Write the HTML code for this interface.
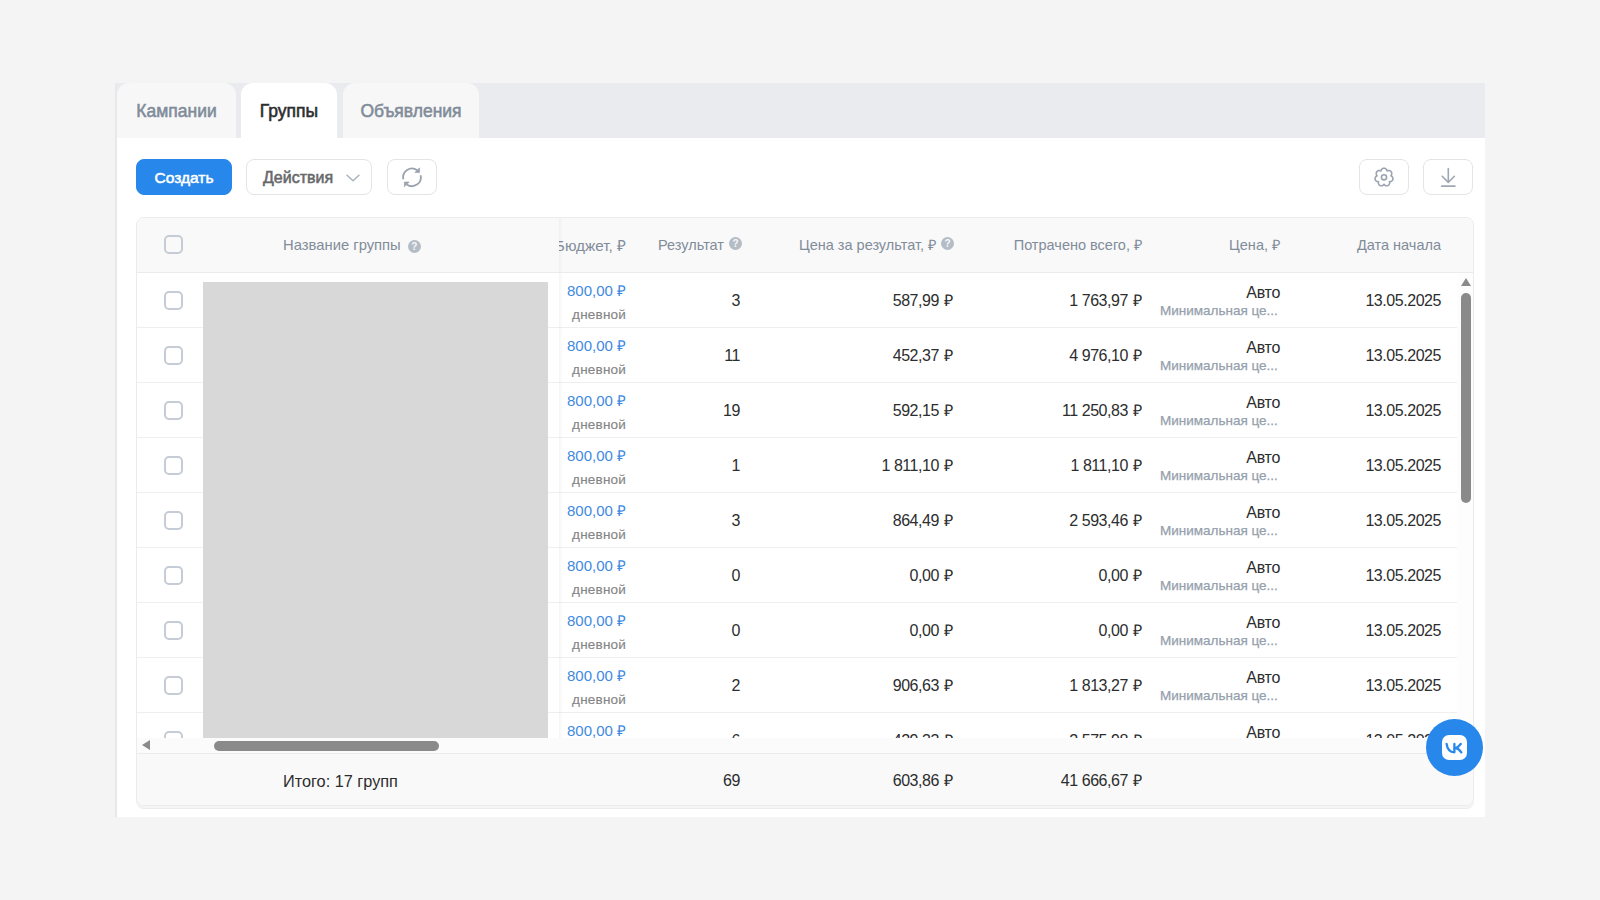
<!DOCTYPE html>
<html><head><meta charset="utf-8"><style>
*{margin:0;padding:0;box-sizing:border-box}
html,body{width:1600px;height:900px;overflow:hidden;background:#f4f4f4;font-family:"Liberation Sans",sans-serif}
.container{position:absolute;left:115px;top:83px;width:1370px;height:734px;background:#fff;border-left:2px solid #e6e8ec}
.tabbar{position:absolute;left:0;top:0;width:1368px;height:55px;background:#e9ebef}
.tab{position:absolute;top:0;height:55px;border-radius:12px 12px 0 0;background:#f7f7f8;color:#818c99;font-size:17.5px;font-weight:normal;-webkit-text-stroke:0.55px currentColor;line-height:57px;text-align:center}
.t1{left:0;width:119px}
.t2{left:124px;width:96px;background:#fff;color:#2c2d2e}
.t3{left:226px;width:136px}
.btn{position:absolute;top:76px;height:36px;border-radius:8px;border:1px solid #e3e4e7;background:#fff;font-size:15.5px;font-weight:normal;-webkit-text-stroke:0.55px currentColor;line-height:35px}
.create{left:19px;width:96px;background:#2787eb;border-color:#2787eb;color:#fff;text-align:center}
.actions{left:129px;width:126px;color:#666869;padding-left:16px;font-size:16px}
.chev{position:absolute;left:99px;top:14px}
.icon{width:50px}
.icon svg{position:absolute;left:12px;top:5px}
.refresh{left:270px}
.gear{left:1242px}
.dl{left:1306px}
.table{position:absolute;left:19px;top:134px;width:1338px;height:589px;border:1px solid #ebebeb;border-radius:8px;overflow:hidden;background:#fff}.tshadow{position:absolute;left:19px;top:134px;width:1338px;height:589px;border-radius:8px;box-shadow:0 1px 0 #f5f5f5,0 2px 0 #f5f5f5,0 3px 0 #ececec}
.thead{position:absolute;left:0;top:0;width:100%;height:55px;background:#f9f9f9;border-bottom:1px solid #ebebeb}
.cb{position:absolute;left:27px;width:19px;height:19px;border:2px solid #c5ccd5;border-radius:5px}
.hcb{top:17px}
.h{position:absolute;top:19px;font-size:14.5px;line-height:17px;color:#818c99;white-space:nowrap}
.q{position:relative;display:inline-block;width:13px;height:13px;border-radius:50%;background:#b4bcc6;color:#f9f9f9;font-size:10px;font-weight:bold;text-align:center;line-height:13px;margin-left:5px;vertical-align:top;top:0px}
.hname{left:146px;font-size:14.8px}.hname .q{top:3px;margin-left:7px}
.hbud{right:847px;font-size:15.3px}
.hres{right:731px}
.hprice{right:519px}
.hspent{right:331px}
.hcena{right:193px}
.hdate{right:32px}
.body{position:absolute;left:0;top:55px;width:100%;height:465px;overflow:hidden}
.row{position:absolute;left:0;width:1336px;height:55px;border-bottom:1px solid #efefef}
.num{position:absolute;top:19px;font-size:16px;letter-spacing:-0.45px;color:#2c2d2e;white-space:nowrap;text-align:right}
.budget{position:absolute;right:847px;top:9px;font-size:15px;color:#3f8ae0;white-space:nowrap}
.daily{position:absolute;right:847px;top:34px;font-size:13.5px;letter-spacing:0.2px;color:#858585;-webkit-text-stroke:0.15px currentColor;white-space:nowrap}
.res{right:733px}
.price{right:520px}
.spent{right:331px}
.auto{position:absolute;right:193px;top:11px;font-size:16px;letter-spacing:-0.3px;color:#2c2d2e}
.minp{position:absolute;left:1023px;top:30px;font-size:13.5px;color:#95a0ac;-webkit-text-stroke:0.25px currentColor;white-space:nowrap}
.date{right:32px}
.sticky{position:absolute;left:422px;top:0;width:4px;height:466px;background:linear-gradient(to right,rgba(0,0,0,0.04),rgba(0,0,0,0))}
.redact{position:absolute;left:66px;top:9px;width:345px;height:457px;background:#d8d8d8}
.vscroll{position:absolute;left:1320px;top:0;width:16px;height:466px;background:#fdfdfd}
.varrow{position:absolute;left:4px;top:5px;width:0;height:0;border-left:5px solid transparent;border-right:5px solid transparent;border-bottom:8px solid #8a8a8a}
.vthumb{position:absolute;left:4px;top:20px;width:10px;height:210px;border-radius:5px;background:#8a8a8a}
.hscroll{position:absolute;left:0;top:520px;width:100%;height:15px;background:#fbfbfb}
.harrow{position:absolute;left:5px;top:2px;width:0;height:0;border-top:5px solid transparent;border-bottom:5px solid transparent;border-right:8px solid #8a8a8a}
.hthumb{position:absolute;left:77px;top:3px;width:225px;height:10px;border-radius:5px;background:#8a8a8a}
.tfoot{position:absolute;left:0;top:535px;width:100%;height:52px;background:#f9f9f9;border-top:1px solid #ebebeb}
.ftotal{position:absolute;left:146px;top:18px;font-size:16.3px;color:#2c2d2e}
.fres{right:733px;top:18px}
.fprice{right:520px;top:18px}
.fspent{right:331px;top:18px}
.vk{position:absolute;left:1426px;top:719px;width:57px;height:57px;border-radius:50%;background:#2787eb}
.vkin{position:absolute;left:16px;top:16px;width:25px;height:25px;border-radius:7px;background:#fff}.vkin svg{position:absolute;left:-4px;top:-4px}

.hstickybg{position:absolute;left:0;top:0;width:422px;height:54px;background:#f9f9f9}.hsticky{position:absolute;left:422px;top:0;width:4px;height:54px;background:linear-gradient(to right,rgba(0,0,0,0.035),rgba(0,0,0,0))}

.r{line-height:0}
.num .r{margin-left:1.5px}

</style></head><body>
<div class="container">
 <div class="tabbar">
  <div class="tab t1">Кампании</div>
  <div class="tab t2 active">Группы</div>
  <div class="tab t3">Объявления</div>
 </div>
 <div class="btn create">Создать</div>
 <div class="btn actions">Действия<svg class="chev" width="14" height="8" viewBox="0 0 14 8"><path d="M1 1.2 L7 6.8 L13 1.2" fill="none" stroke="#aab3bd" stroke-width="1.5" stroke-linecap="round" stroke-linejoin="round"/></svg></div>
 <div class="btn icon refresh"><svg width="24" height="24" viewBox="0 0 24 24"><g fill="none" stroke="#99a2ad" stroke-width="1.8"><path d="M3.45 14.4 A8.8 8.8 0 0 1 17.2 5.2"/><path d="M20.55 10.2 A8.8 8.8 0 0 1 6.8 19.4"/></g><path d="M19.6 2.8 L19.6 7.6 L14.8 7.6 Z" fill="#99a2ad" stroke="#99a2ad" stroke-width="0.6" stroke-linejoin="round"/><path d="M4.4 21.8 L4.4 17.0 L9.2 17.0 Z" fill="#99a2ad" stroke="#99a2ad" stroke-width="0.6" stroke-linejoin="round"/></svg></div>
 <div class="btn icon gear"><svg width="24" height="24" viewBox="0 0 24 24"><path d="M12.00 3.20L12.27 3.21L12.54 3.25L12.81 3.32L13.07 3.41L13.32 3.53L13.57 3.67L13.80 3.83L14.02 4.02L14.23 4.23L14.42 4.46L14.59 4.71L14.75 4.98L14.88 5.27L14.99 5.59L15.04 5.99L15.38 5.78L15.70 5.66L16.01 5.59L16.32 5.54L16.62 5.52L16.92 5.53L17.21 5.56L17.50 5.61L17.77 5.69L18.03 5.80L18.28 5.92L18.52 6.07L18.74 6.24L18.93 6.42L19.11 6.63L19.27 6.85L19.41 7.08L19.53 7.33L19.62 7.59L19.68 7.86L19.73 8.14L19.74 8.43L19.73 8.72L19.70 9.01L19.64 9.30L19.55 9.59L19.44 9.88L19.29 10.17L19.11 10.45L18.82 10.74L19.21 10.88L19.50 11.06L19.75 11.25L19.98 11.46L20.18 11.69L20.36 11.92L20.52 12.17L20.66 12.43L20.76 12.69L20.85 12.96L20.90 13.24L20.94 13.51L20.94 13.78L20.92 14.06L20.87 14.32L20.80 14.59L20.70 14.84L20.58 15.09L20.43 15.32L20.26 15.54L20.07 15.75L19.85 15.94L19.62 16.11L19.37 16.27L19.11 16.40L18.82 16.52L18.53 16.61L18.21 16.67L17.88 16.71L17.47 16.66L17.60 17.05L17.65 17.38L17.65 17.70L17.63 18.02L17.58 18.32L17.51 18.61L17.41 18.88L17.30 19.15L17.16 19.40L17.00 19.63L16.82 19.85L16.62 20.04L16.41 20.22L16.19 20.37L15.95 20.50L15.70 20.60L15.44 20.69L15.17 20.74L14.89 20.77L14.61 20.78L14.33 20.76L14.05 20.71L13.77 20.64L13.50 20.54L13.22 20.41L12.96 20.27L12.70 20.09L12.45 19.88L12.22 19.64L12.00 19.30L11.78 19.64L11.55 19.88L11.30 20.09L11.04 20.27L10.78 20.41L10.50 20.54L10.23 20.64L9.95 20.71L9.67 20.76L9.39 20.78L9.11 20.77L8.83 20.74L8.56 20.69L8.30 20.60L8.05 20.50L7.81 20.37L7.59 20.22L7.38 20.04L7.18 19.85L7.00 19.63L6.84 19.40L6.70 19.15L6.59 18.88L6.49 18.61L6.42 18.32L6.37 18.02L6.35 17.70L6.35 17.38L6.40 17.05L6.53 16.66L6.12 16.71L5.79 16.67L5.47 16.61L5.18 16.52L4.89 16.40L4.63 16.27L4.38 16.11L4.15 15.94L3.93 15.75L3.74 15.54L3.57 15.32L3.42 15.09L3.30 14.84L3.20 14.59L3.13 14.32L3.08 14.06L3.06 13.78L3.06 13.51L3.10 13.24L3.15 12.96L3.24 12.69L3.34 12.43L3.48 12.17L3.64 11.92L3.82 11.69L4.02 11.46L4.25 11.25L4.50 11.06L4.79 10.88L5.18 10.74L4.89 10.45L4.71 10.17L4.56 9.88L4.45 9.59L4.36 9.30L4.30 9.01L4.27 8.72L4.26 8.43L4.27 8.14L4.32 7.86L4.38 7.59L4.47 7.33L4.59 7.08L4.73 6.85L4.89 6.63L5.07 6.42L5.26 6.24L5.48 6.07L5.72 5.92L5.97 5.80L6.23 5.69L6.50 5.61L6.79 5.56L7.08 5.53L7.38 5.52L7.68 5.54L7.99 5.59L8.30 5.66L8.62 5.78L8.96 5.99L9.01 5.59L9.12 5.27L9.25 4.98L9.41 4.71L9.58 4.46L9.77 4.23L9.98 4.02L10.20 3.83L10.43 3.67L10.68 3.53L10.93 3.41L11.19 3.32L11.46 3.25L11.73 3.21Z" fill="none" stroke="#9aa3ae" stroke-width="1.6" stroke-linejoin="round"/><circle cx="12" cy="12.3" r="2.6" fill="none" stroke="#9aa3ae" stroke-width="1.6"/></svg></div>
 <div class="btn icon dl"><svg width="24" height="24" viewBox="0 0 24 24"><g fill="none" stroke="#9fa8b2" stroke-width="1.6" stroke-linecap="round" stroke-linejoin="round"><path d="M12.3 3.6 V17.2"/><path d="M6.2 11.3 L12.3 17.4 L18.4 11.3"/><path d="M5.6 21.1 H19"/></g></svg></div>
 <div class="tshadow"></div>
 <div class="table">
  <div class="thead">
   
      <div class="h hbud">Бюджет, <span class="r">₽</span></div>
   <div class="h hres">Результат<span class="q">?</span></div>
   <div class="h hprice">Цена за результат, <span class="r">₽</span><span class="q">?</span></div>
   <div class="h hspent">Потрачено всего, <span class="r">₽</span></div>
   <div class="h hcena">Цена, <span class="r">₽</span></div>
   <div class="h hdate">Дата начала</div>
   <div class="hstickybg"></div><div class="hsticky"></div><div class="cb hcb"></div><div class="h hname">Название группы<span class="q">?</span></div>
  </div>
  <div class="body">
   <div class="row" style="top:0px"><div class="cb" style="top:18px"></div><div class="budget">800,00 <span class="r">₽</span></div><div class="daily">дневной</div><div class="num res">3</div><div class="num price">587,99 <span class="r">₽</span></div><div class="num spent">1 763,97 <span class="r">₽</span></div><div class="auto">Авто</div><div class="minp">Минимальная це...</div><div class="num date">13.05.2025</div></div><div class="row" style="top:55px"><div class="cb" style="top:18px"></div><div class="budget">800,00 <span class="r">₽</span></div><div class="daily">дневной</div><div class="num res">11</div><div class="num price">452,37 <span class="r">₽</span></div><div class="num spent">4 976,10 <span class="r">₽</span></div><div class="auto">Авто</div><div class="minp">Минимальная це...</div><div class="num date">13.05.2025</div></div><div class="row" style="top:110px"><div class="cb" style="top:18px"></div><div class="budget">800,00 <span class="r">₽</span></div><div class="daily">дневной</div><div class="num res">19</div><div class="num price">592,15 <span class="r">₽</span></div><div class="num spent">11 250,83 <span class="r">₽</span></div><div class="auto">Авто</div><div class="minp">Минимальная це...</div><div class="num date">13.05.2025</div></div><div class="row" style="top:165px"><div class="cb" style="top:18px"></div><div class="budget">800,00 <span class="r">₽</span></div><div class="daily">дневной</div><div class="num res">1</div><div class="num price">1 811,10 <span class="r">₽</span></div><div class="num spent">1 811,10 <span class="r">₽</span></div><div class="auto">Авто</div><div class="minp">Минимальная це...</div><div class="num date">13.05.2025</div></div><div class="row" style="top:220px"><div class="cb" style="top:18px"></div><div class="budget">800,00 <span class="r">₽</span></div><div class="daily">дневной</div><div class="num res">3</div><div class="num price">864,49 <span class="r">₽</span></div><div class="num spent">2 593,46 <span class="r">₽</span></div><div class="auto">Авто</div><div class="minp">Минимальная це...</div><div class="num date">13.05.2025</div></div><div class="row" style="top:275px"><div class="cb" style="top:18px"></div><div class="budget">800,00 <span class="r">₽</span></div><div class="daily">дневной</div><div class="num res">0</div><div class="num price">0,00 <span class="r">₽</span></div><div class="num spent">0,00 <span class="r">₽</span></div><div class="auto">Авто</div><div class="minp">Минимальная це...</div><div class="num date">13.05.2025</div></div><div class="row" style="top:330px"><div class="cb" style="top:18px"></div><div class="budget">800,00 <span class="r">₽</span></div><div class="daily">дневной</div><div class="num res">0</div><div class="num price">0,00 <span class="r">₽</span></div><div class="num spent">0,00 <span class="r">₽</span></div><div class="auto">Авто</div><div class="minp">Минимальная це...</div><div class="num date">13.05.2025</div></div><div class="row" style="top:385px"><div class="cb" style="top:18px"></div><div class="budget">800,00 <span class="r">₽</span></div><div class="daily">дневной</div><div class="num res">2</div><div class="num price">906,63 <span class="r">₽</span></div><div class="num spent">1 813,27 <span class="r">₽</span></div><div class="auto">Авто</div><div class="minp">Минимальная це...</div><div class="num date">13.05.2025</div></div><div class="row" style="top:440px"><div class="cb" style="top:18px"></div><div class="budget">800,00 <span class="r">₽</span></div><div class="daily">дневной</div><div class="num res">6</div><div class="num price">429,33 <span class="r">₽</span></div><div class="num spent">2 575,98 <span class="r">₽</span></div><div class="auto">Авто</div><div class="minp">Минимальная це...</div><div class="num date">13.05.2025</div></div>
   <div class="sticky"></div>
   <div class="redact"></div>
   <div class="vscroll"><div class="varrow"></div><div class="vthumb"></div></div>
  </div>
  <div class="hscroll"><div class="harrow"></div><div class="hthumb"></div></div>
  <div class="tfoot">
   <div class="ftotal">Итого: 17 групп</div>
   <div class="num fres">69</div>
   <div class="num fprice">603,86 <span class="r">₽</span></div>
   <div class="num fspent">41 666,67 <span class="r">₽</span></div>
  </div>
 </div>
</div>
<div class="vk"><div class="vkin"><svg width="32" height="32" viewBox="0 0 32 32"><g fill="none" stroke="#2787eb" stroke-width="2.3" stroke-linecap="round" stroke-linejoin="round"><path d="M8.6 12.9 C9.3 18.3 11.8 21.2 16.4 21.3 L16.4 12.9"/><path d="M16.6 17.3 C19.2 16.6 21.5 15 22.8 12.9"/><path d="M17.8 17.2 C20.2 17.6 22.2 19.6 23.3 21.4"/></g></svg></div></div>
</body></html>
